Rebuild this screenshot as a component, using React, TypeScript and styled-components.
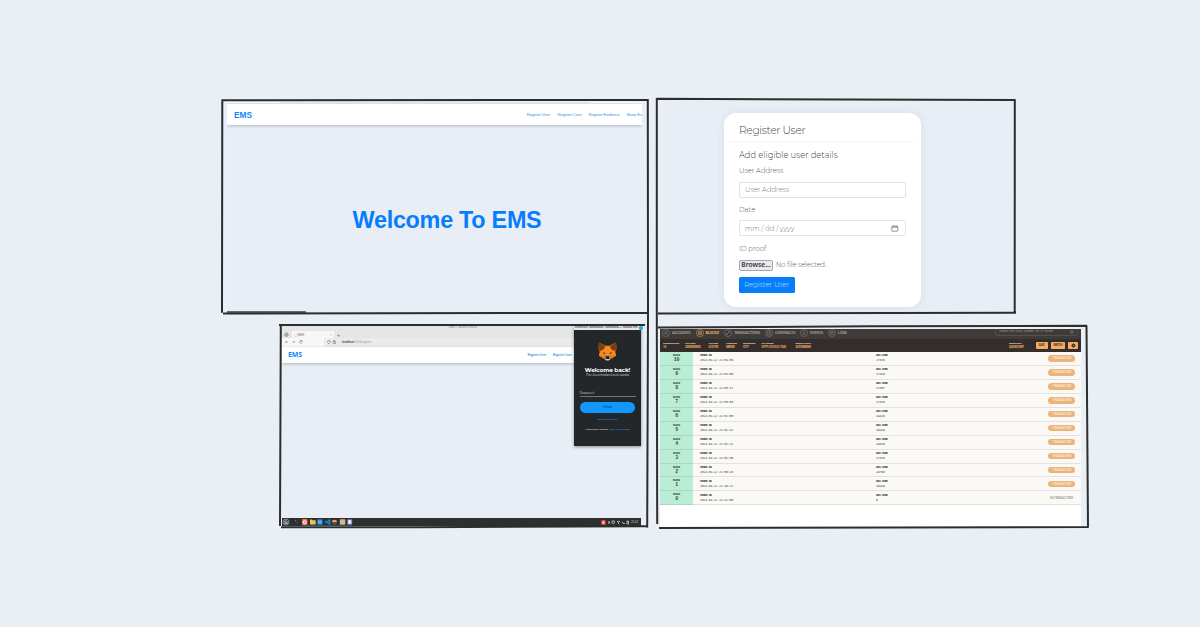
import React from "react";
import styled, { createGlobalStyle } from "styled-components";

const Global = createGlobalStyle`
  * { box-sizing: border-box; }
  body { margin: 0; background: #eaeff6; font-family: "Liberation Sans", Arial, sans-serif; }
`;

const Canvas = styled.main`
  position: relative;
  width: 1200px;
  height: 627px;
  overflow: hidden;
  background: #eaeff6;
`;

const Shot = styled.section<{ $x: number; $y: number; $w: number; $h: number }>`
  position: absolute;
  left: ${(p) => p.$x}px;
  top: ${(p) => p.$y}px;
  width: ${(p) => p.$w}px;
  height: ${(p) => p.$h}px;
  display: flex;
  flex-direction: column;
  overflow: hidden;
  background: #e9eef6;
`;

const Frame = styled.svg`
  position: absolute;
  inset: 0;
  pointer-events: none;
`;

/* ---------- Landing page ---------- */

const TopEdge = styled.div`
  height: 2px;
  flex: none;
  display: flex;
  justify-content: space-between;
  background: #e9e9eb;
`;
const EdgeTab = styled.span`
  width: 53px;
  height: 1px;
  background: #f8f8fa;
`;

const SiteNav = styled.nav<{ $h: number; $pad: string; $gap: number }>`
  height: ${(p) => p.$h}px;
  flex: none;
  display: flex;
  align-items: center;
  gap: ${(p) => p.$gap}px;
  padding: ${(p) => p.$pad};
  background: #fff;
  box-shadow: 0 1px 3px rgba(60, 70, 90, 0.32);
  white-space: nowrap;
`;
const Brand = styled.b<{ $size: number; $font?: string }>`
  margin-right: auto;
  color: #1284fb;
  font-family: ${(p) => p.$font ?? '"Liberation Sans"'}, sans-serif;
  font-size: ${(p) => p.$size}px;
  line-height: 1;
`;
const NavLink = styled.span<{ $w: number }>`
  width: ${(p) => p.$w}px;
  flex: none;
  color: #3a94e2;
  font-size: 4.1px;
  letter-spacing: -0.14px;
  line-height: 6px;
`;
const TinyLink = styled.span`
  font-family: "Open Sans", sans-serif;
  font-size: 3.3px;
  font-weight: 600;
  letter-spacing: -0.2px;
`;
const Hero = styled.div`
  flex: 1;
  display: flex;
  justify-content: center;
  padding: 81px 0 0 25px;
`;
const HeroTitle = styled.h1`
  margin: 0;
  color: #077dfb;
  font-size: 23.4px;
  letter-spacing: -0.28px;
  line-height: 28px;
  white-space: nowrap;
`;
const StatusLine = styled.div`
  width: 79px;
  height: 2px;
  flex: none;
  background: #62676b;
`;

/* ---------- Registration form ---------- */

const FormStage = styled.div`
  flex: 1;
  padding: 13px 0 0 66px;
`;
const Card = styled.form`
  width: 197px;
  height: 194px;
  padding: 11px 6px 0;
  border-radius: 12px;
  background: #fff;
  box-shadow: 0 0 9px rgba(120, 130, 170, 0.16);
  color: #4e5258;
  font-family: Montserrat, Inter, sans-serif;
  font-weight: 300;
  white-space: nowrap;
`;
const CardTitle = styled.h2`
  margin: 0;
  height: 18px;
  padding-left: 9px;
  border-bottom: 1px solid #f4f4f6;
  color: #3f4348;
  font-size: 10.7px;
  letter-spacing: -0.35px;
  line-height: 14px;
  font-weight: 300;
`;
const Fields = styled.div`
  display: flex;
  flex-direction: column;
  align-items: flex-start;
  padding: 7px 9px 0 9px;
`;
const Subtitle = styled.p`
  margin: 0 0 5.2px;
  color: #3f4348;
  font-size: 8.4px;
  line-height: 12px;
`;
const Label = styled.label`
  font-size: 6.8px;
  line-height: 10px;
`;
const Input = styled.div`
  display: flex;
  justify-content: space-between;
  align-items: center;
  width: 167px;
  height: 16px;
  margin: 5.4px 0 7.4px;
  padding: 0 6px 0 5px;
  border: 1px solid #e2e3e7;
  border-radius: 2px;
  color: #73777c;
  font-size: 6.8px;
`;
const FileRow = styled.div`
  display: flex;
  align-items: center;
  gap: 3px;
  height: 11px;
  margin-top: 6px;
  font-size: 6.5px;
`;
const Browse = styled.span`
  width: 34px;
  height: 10.5px;
  border: 1px solid #a6a6ab;
  border-radius: 2px;
  background: #e9e9ed;
  color: #35363a;
  font: 600 6.7px/8.5px "Noto Sans", sans-serif;
  text-align: center;
`;
const Submit = styled.span`
  width: 55.5px;
  height: 16px;
  margin-top: 6px;
  border-radius: 1.5px;
  background: #087dfc;
  color: #c4e1ff;
  font-size: 6.8px;
  line-height: 15.5px;
  text-align: center;
`;

/* ---------- Desktop with wallet popup ---------- */

const WindowTitle = styled.div`
  height: 5px;
  flex: none;
  padding-left: 167px;
  background: #e5e5e5;
  color: #777;
  font: 2.7px/3px "Noto Sans", sans-serif;
`;
const TabStrip = styled.div`
  display: flex;
  align-items: center;
  gap: 3px;
  height: 7px;
  flex: none;
  padding-left: 2px;
  background: #e5e5e5;
  color: #666;
  font-size: 5px;
`;
const BrowserTab = styled.span`
  display: flex;
  align-items: center;
  justify-content: space-between;
  width: 42px;
  height: 6.5px;
  padding: 0 2px;
  border-radius: 1px;
  background: #f7f7f8;
  font-size: 3px;
  white-space: pre;
`;
const AddressBar = styled.div`
  display: flex;
  align-items: center;
  height: 8.5px;
  flex: none;
  padding-left: 3px;
  background: linear-gradient(90deg, #f7f7f7 0 42px, #ebebeb 42px);
  color: #777;
`;
const Url = styled.span`
  padding-left: 4px;
  color: #999;
  font-size: 2.8px;
  line-height: 6px;
  b { color: #444; }
`;
const DesktopBody = styled.div`
  flex: 1;
`;
const Taskbar = styled.div`
  display: flex;
  align-items: center;
  height: 8px;
  flex: none;
  width: 359px;
  background: #2d2f30;
`;
const Apps = styled.div`
  display: flex;
  align-items: center;
  margin-right: auto;
`;
const Tray = styled.div`
  display: flex;
  gap: 1.6px;
  align-items: center;
  padding-right: 3px;
  color: #ddd;
  font-size: 2.7px;
`;
const Popup = styled.aside`
  position: absolute;
  left: 574px;
  top: 326px;
  width: 67px;
  height: 120px;
  display: flex;
  flex-direction: column;
  align-items: center;
  background: #24272a;
  box-shadow: 0 1px 3px rgba(40, 45, 60, 0.5);
  font-family: Montserrat, Inter, sans-serif;
  white-space: nowrap;
`;
const PopupBar = styled.div`
  display: flex;
  align-items: flex-start;
  justify-content: space-between;
  width: 100%;
  height: 4px;
  flex: none;
  padding: 0 1px;
  background: #e6e8e9;
  color: #333;
  font: 500 2.9px/3px "Noto Sans", sans-serif;
  letter-spacing: -0.13px;
`;
const BlueDot = styled.i`
  width: 3.5px;
  height: 3.5px;
  flex: none;
  border-radius: 50%;
  background: #2ea5e6;
`;
const FoxMark = styled.svg`
  flex: none;
  margin-top: 12px;
`;
const PopupTitle = styled.b`
  margin-top: 4.5px;
  color: #fff;
  font-size: 5.8px;
  letter-spacing: -0.12px;
  line-height: 7px;
`;
const Tagline = styled.span`
  color: #dfe2e4;
  font-size: 3.1px;
  letter-spacing: -0.1px;
  line-height: 5px;
`;
const Password = styled.div`
  width: 56px;
  height: 5.5px;
  margin-top: 13.5px;
  border-bottom: 1px solid #71787d;
  color: #d5dade;
  font-size: 3.1px;
  line-height: 4px;
`;
const Unlock = styled.div`
  width: 55.5px;
  height: 11px;
  margin-top: 5px;
  border-radius: 6px;
  background: #1098fc;
  color: #123c5c;
  font-size: 2.6px;
  font-weight: 500;
  line-height: 11px;
  text-align: center;
`;
const SmallLine = styled.span<{ $mt: number; $blue?: boolean }>`
  margin-top: ${(p) => p.$mt}px;
  color: ${(p) => (p.$blue ? "#1591e4" : "#dcdfe1")};
  font-size: 2.5px;
  font-weight: 500;
  letter-spacing: -0.13px;
  line-height: 4px;
  em { color: #1591e4; font-style: normal; }
`;

/* ---------- Block explorer ---------- */

const Explorer = styled(Shot)`
  background: #fff;
  font-family: "Liberation Mono", monospace;
  white-space: nowrap;
`;
const Menu = styled.div`
  display: flex;
  align-items: center;
  height: 10px;
  flex: none;
  padding: 0 3px 3px 2px;
  background: #3f3b38;
`;
const MenuItem = styled.span<{ $w: number; $on?: boolean }>`
  display: flex;
  align-items: center;
  gap: 2px;
  width: ${(p) => p.$w}px;
  color: ${(p) => (p.$on ? "#e7a45c" : "#a9a5a1")};
  font: ${(p) => (p.$on ? 700 : 500)} 4.1px/6px Roboto, sans-serif;
  letter-spacing: -0.37px;
`;
const Search = styled.span`
  display: flex;
  align-items: center;
  justify-content: space-between;
  width: 83px;
  height: 7px;
  margin-left: auto;
  padding: 0 3px;
  border: 1px solid #55504c;
  border-top: 0;
  border-radius: 3px;
  color: #928d89;
  font: 2.8px/4px "Liberation Mono", monospace;
  letter-spacing: -0.21px;
`;
const Stats = styled.div`
  display: flex;
  align-items: center;
  height: 13px;
  flex: none;
  padding-left: 3px;
  background: #332e2b;
`;
const Stat = styled.span<{ $w: number }>`
  display: flex;
  flex-direction: column;
  width: ${(p) => p.$w}px;
  flex: none;
  color: #e0dcd8;
  font: 700 2.5px/2.8px Roboto, sans-serif;
  letter-spacing: -0.27px;
  em { color: #f2ab5e; font-size: 2.9px; font-style: normal; }
`;
const Workspace = styled(Stat).attrs({ $w: 26.5 })`
  margin-left: auto;
`;
const StatButton = styled.span<{ $w: number }>`
  display: flex;
  align-items: center;
  justify-content: center;
  width: ${(p) => p.$w}px;
  height: 7.5px;
  margin-right: 3px;
  flex: none;
  border-radius: 0.8px;
  background: #f4ac62;
  color: #4a3520;
  font: 700 2.7px/7px Roboto, sans-serif;
  letter-spacing: -0.2px;
`;
const BlockRow = styled.div`
  display: grid;
  grid-template-columns: 33px 7px 176px 172px 27px;
  align-items: center;
  height: 13.95px;
  flex: none;
  border-bottom: 1px solid #e3e2de;
  background: #faf9f5;
  color: #474542;
`;
const BlockId = styled.div`
  grid-column: 1 / 2;
  align-self: stretch;
  margin-bottom: -1px;
  padding-top: 2px;
  border-bottom: 1px solid #a9d8c3;
  background: #bbecd5;
  color: #3e4e47;
  text-align: center;
  font: 700 2.9px/4px "Liberation Mono", monospace;
  letter-spacing: -0.35px;
  b { display: block; font-size: 5px; line-height: 5.5px; }
`;
const Cell = styled.div<{ $col: number }>`
  grid-column: ${(p) => p.$col};
  font-size: 3.2px;
  letter-spacing: -0.18px;
  line-height: 4px;
  span { display: block; }
  span:first-child { font-size: 3px; font-weight: 700; letter-spacing: -0.36px; }
`;
const Pill = styled.span<{ $empty?: boolean }>`
  grid-column: 5;
  height: 6.5px;
  border-radius: 4px;
  background: ${(p) => (p.$empty ? "transparent" : "#ebb47b")};
  color: ${(p) => (p.$empty ? "#807e7b" : "#fff6ea")};
  font: 2.9px/6.5px Roboto, sans-serif;
  letter-spacing: -0.2px;
  text-align: center;
`;

const blocks: [number, string, string][] = [
  [10, "21:54:36", "27816"],
  [9, "21:54:05", "27816"],
  [8, "21:53:11", "27807"],
  [7, "21:53:53", "27816"],
  [6, "21:52:50", "29416"],
  [5, "21:52:41", "29416"],
  [4, "21:52:21", "29416"],
  [3, "21:51:39", "27816"],
  [2, "21:50:28", "29768"],
  [1, "21:49:21", "29416"],
  [0, "21:42:00", "0"],
];

const menu: [string, number][] = [
  ["ACCOUNTS", 33.5],
  ["BLOCKS", 28.5],
  ["TRANSACTIONS", 41],
  ["CONTRACTS", 35],
  ["EVENTS", 28],
  ["LOGS", 24],
];

const stats: [string, string, number][] = [
  ["CURRENT BLOCK", "10", 22],
  ["GAS PRICE", "20000000000", 23.5],
  ["GAS LIMIT", "6721975", 17.5],
  ["HARDFORK", "MERGE", 17],
  ["NETWORK ID", "5777", 18.5],
  ["RPC SERVER", "HTTP://127.0.0.1:7545", 34],
  ["MINING STATUS", "AUTOMINING", 19],
];

function MenuIcon({ kind, on }: { kind: number; on?: boolean }) {
  const shapes = [
    <path key="a" d="M4 2.2a1 1 0 1 1 0 2 1 1 0 0 1 0-2M2.2 6c0-2 3.6-2 3.6 0" />,
    <path key="b" d="M2.5 2.5h3v3h-3zM4 2.5v3M2.5 4h3" />,
    <path key="c" d="M2.3 5.5 5.6 2.4M4 2.4h1.6V4M2.3 4v1.5H4" />,
    <path key="d" d="M2.6 2h2.8v4H2.6zM3.2 3.2h1.6M3.2 4.4h1.6" />,
    <path key="e" d="M2.4 5.2h3.2L5 4.5V3.2a1 1 0 0 0-2 0v1.3zM3.6 5.8h.8" />,
    <path key="f" d="M2.2 2.6h3.6v2.8H2.2zM3 3.5h2M3 4.5h1.4" />,
  ];
  return (
    <svg width="8" height="8" viewBox="0 0 8 8" fill="none" stroke={on ? "#e7a45c" : "#8a8581"} strokeWidth=".5">
      <circle cx="4" cy="4" r="3.6" />
      {shapes[kind]}
    </svg>
  );
}

function Fox() {
  return (
    <FoxMark width="19" height="19" viewBox="0 0 40 40">
      <path fill="#e8791f" d="M2 1 16 8h8L38 1l1 13-3 7 2 8-8 5-6 3h-8l-6-3-8-5 2-8-3-7z" />
      <path fill="#7b3d0c" d="m2 1 13 8-3 6-8 4-3-7zM38 1 25 9l3 6 8 4 3-7z" />
      <path fill="#f68b23" d="M16 9h8l3 7-2 12H15l-2-12zM4 21l9-4 2 11-13 1zM36 21l-9-4-2 11 13 1z" />
      <path fill="#5d4a3b" d="m11 21 5 2-1 3-4-2zM29 21l-5 2 1 3 4-2z" />
      <path fill="#e07a28" d="m11 29 4-1h10l4 1-3 6H14z" />
      <path fill="#d7c1b3" d="m14 32 2-1h8l2 1-1 5-2 2h-6l-2-2z" />
      <path fill="#182029" d="m16 31 1-1h6l1 1 .5 4-1.5 1h-6l-1.5-1z" />
    </FoxMark>
  );
}

function AppIcons() {
  return (
    <svg width="71" height="8" viewBox="0 0 71 8">
      <g fill="none" stroke="#aeb2b4" strokeWidth=".7">
        <circle cx="4" cy="4" r="3" />
        <circle cx="4" cy="4" r="1.3" />
        <path d="M3 1.2v4h2v-2M1.4 5.5h5" />
      </g>
      <path d="m13 2 1 .8-1 .8m1.2.8h1.2" fill="none" stroke="#999" strokeWidth=".5" />
      <rect x="20" y="1" width="5.5" height="6" rx="1" fill="#f1744e" />
      <circle cx="22.7" cy="4.2" r="1.4" fill="none" stroke="#fff" />
      <path d="M28 1.5h2l.7.8h3v4.2H28z" fill="#f2bf58" />
      <rect x="35.3" y="1.3" width="5.2" height="5.4" rx=".8" fill="#238fc9" />
      <path d="M36.5 3h2.7v2h-2.7z" fill="none" stroke="#bce5f4" strokeWidth=".5" />
      <path d="m43 2.8 4 3V2l-4 3.2M47 1.5l1 .5v4l-1 .5" fill="none" stroke="#1997e5" strokeWidth="1" />
      <path d="M50 4c0-3 5-3 5 0z" fill="#e2a06c" />
      <path d="M50 4h5l-1 2.6h-3z" fill="#7c4b34" />
      <rect x="57.8" y="1.2" width="5.5" height="5.6" rx=".7" fill="#d9b78b" />
      <rect x="65.2" y="1.2" width="5" height="5.6" rx=".7" fill="#827cc8" />
      <path d="M66.2 2.2h3v3.6h-3z" fill="#eef" />
      <path d="M20 7.7h50" stroke="#1f7ea9" strokeWidth=".6" />
    </svg>
  );
}

function TrayIcons() {
  return (
    <svg width="29" height="7" viewBox="0 0 29 7">
      <rect x=".2" y="1" width="4.5" height="5" rx=".7" fill="#e53c35" />
      <path d="M1.4 2.5h2v2h-2z" fill="#fff" />
      <path
        d="M8 2v3M7.5 3.5h1.4M11 2h2.4v1.5l-1.2 1.6L11 3.5zM16 2.7q1.5-1 3 0M17.5 3v2M21 3.5h1l1.2 1.5V4M26 2h1.5v3H26z"
        fill="none"
        stroke="#ccd0d2"
        strokeWidth=".8"
      />
    </svg>
  );
}

export default function App() {
  return (
    <>
      <Global />
      <Canvas>
        <Shot $x={227} $y={102} $w={415} $h={211}>
          <TopEdge><EdgeTab /><EdgeTab /></TopEdge>
          <SiteNav $h={21} $pad="1px 0 0 7px" $gap={7.5}>
            <Brand $size={8.3}>EMS</Brand>
            <NavLink $w={23.3}>Register User</NavLink>
            <NavLink $w={23.5}>Register Case</NavLink>
            <NavLink $w={30.5}>Register Evidence</NavLink>
            <NavLink $w={15.5}>Show Evi</NavLink>
          </SiteNav>
          <Hero><HeroTitle>Welcome To EMS</HeroTitle></Hero>
          <StatusLine />
        </Shot>

        <Shot $x={658} $y={100} $w={356} $h={212}>
          <FormStage>
            <Card>
              <CardTitle>Register User</CardTitle>
              <Fields>
                <Subtitle>Add eligible user details</Subtitle>
                <Label>User Address</Label>
                <Input>User Address</Input>
                <Label>Date</Label>
                <Input>
                  mm / dd / yyyy
                  <svg width="8" height="7" viewBox="0 0 8 7" fill="none" stroke="#66696e" strokeWidth=".7">
                    <rect x=".8" y="1.2" width="6" height="5" rx=".6" />
                    <path d="M.8 2.2h6M2.3 .3v1M5.3 .3v1" />
                  </svg>
                </Input>
                <Label>ID proof</Label>
                <FileRow><Browse>Browse...</Browse>No file selected.</FileRow>
                <Submit>Register User</Submit>
              </Fields>
            </Card>
          </FormStage>
        </Shot>

        <Shot $x={282} $y={326} $w={359} $h={200}>
          <WindowTitle>EMS — Mozilla Firefox</WindowTitle>
          <TabStrip>
            <svg width="5" height="5" viewBox="0 0 5 5" fill="none" stroke="#777" strokeWidth=".8"><path d="M1 2h3v2H1zM1.5 1h2" /></svg>
            <BrowserTab><span>◯ EMS</span><span>×</span></BrowserTab>+
          </TabStrip>
          <AddressBar>
            <svg width="53" height="6" viewBox="0 0 53 6" fill="none" stroke="#777" strokeWidth=".6">
              <path d="M3 3H.5l1-1M.5 3l1 1M7.5 3H10L9 2M17 2a1.4 1.4 0 1 0 .2 1.5M17 1v1.3h-1.2" />
              <path d="M44 1.3 45.3 2v1.2L44 4.8 42.7 3.2V2zM48 2.5h2.5v2H48zM48.5 2.5V1.6h1.5v.9" />
            </svg>
            <Url><b>localhost</b>:3000/register</Url>
          </AddressBar>
          <SiteNav $h={16.5} $pad="1px 69px 0 6px" $gap={6.5}>
            <Brand $size={6.9} $font='"Open Sans"'>EMS</Brand>
            <NavLink $w={18.7}><TinyLink>Register User</TinyLink></NavLink>
            <NavLink $w={19.3}><TinyLink>Register Case</TinyLink></NavLink>
          </SiteNav>
          <DesktopBody />
          <Taskbar>
            <Apps><AppIcons /></Apps>
            <Tray><TrayIcons />21:42</Tray>
          </Taskbar>
        </Shot>

        <Popup>
          <PopupBar>Extension: (MetaMask) - MetaMask — Mozilla Fire…<BlueDot /></PopupBar>
          <Fox />
          <PopupTitle>Welcome back!</PopupTitle>
          <Tagline>The decentralized web awaits</Tagline>
          <Password>Password</Password>
          <Unlock>Unlock</Unlock>
          <SmallLine $mt={5} $blue>Forgot password?</SmallLine>
          <SmallLine $mt={6}>Need help? Contact <em>MetaMask support</em></SmallLine>
        </Popup>

        <Explorer $x={660} $y={329} $w={421} $h={198}>
          <Menu>
            {menu.map(([name, w], i) => (
              <MenuItem key={name} $w={w} $on={i === 1}><MenuIcon kind={i} on={i === 1} />{name}</MenuItem>
            ))}
            <Search>
              SEARCH FOR BLOCK NUMBERS OR TX HASHES
              <svg width="4" height="4" viewBox="0 0 4 4" fill="none" stroke="#aaa" strokeWidth=".5"><circle cx="1.7" cy="1.7" r="1.2" /><path d="m2.6 2.6 1 1" /></svg>
            </Search>
          </Menu>
          <Stats>
            {stats.map(([k, v, w]) => <Stat key={k} $w={w}>{k}<em>{v}</em></Stat>)}
            <Workspace>WORKSPACE<em>QUICKSTART</em></Workspace>
            <StatButton $w={12}>SAVE</StatButton>
            <StatButton $w={14.5}>SWITCH</StatButton>
            <StatButton $w={10}>
              <svg width="5" height="5" viewBox="0 0 5 5" fill="none" stroke="#3c2c20"><circle cx="2.5" cy="2.5" r="1.2" strokeWidth="1.2" /><path strokeWidth=".6" d="M2.5 0v1M2.5 4v1M0 2.5h1M4 2.5h1" /></svg>
            </StatButton>
          </Stats>
          {blocks.map(([n, time, gas]) => (
            <BlockRow key={n}>
              <BlockId>BLOCK<b>{n}</b></BlockId>
              <Cell $col={3}><span>MINED ON</span><span>2024-04-22 {time}</span></Cell>
              <Cell $col={4}><span>GAS USED</span><span>{gas}</span></Cell>
              <Pill $empty={n === 0}>{n === 0 ? "NO TRANSACTIONS" : "1 TRANSACTION"}</Pill>
            </BlockRow>
          ))}
        </Explorer>

        <Frame width="1200" height="627" viewBox="0 0 1200 627" fill="none" stroke="#2a2e2d" strokeWidth="2">
          <path d="M222 100.2 648.5 100M222.3 99.5 222 312.8M223 313.5 648 312.8M647.8 99 648 312 647.2 527.5" />
          <path d="M656.5 98.8 1015.5 100M656.8 98 656.8 313 657.2 524M1014.8 99.5 1014.7 312.8M658 313.5 1016 312.8" />
          <path d="M279 325 645 325M280.8 325 280 526M281 527.3 420 527.2 648 526.3" />
          <path d="M658 327.5 870 326.3 1087 325.8M1086.5 325.5 1088 527.5M659 528 1088.5 527" />
        </Frame>
      </Canvas>
    </>
  );
}
